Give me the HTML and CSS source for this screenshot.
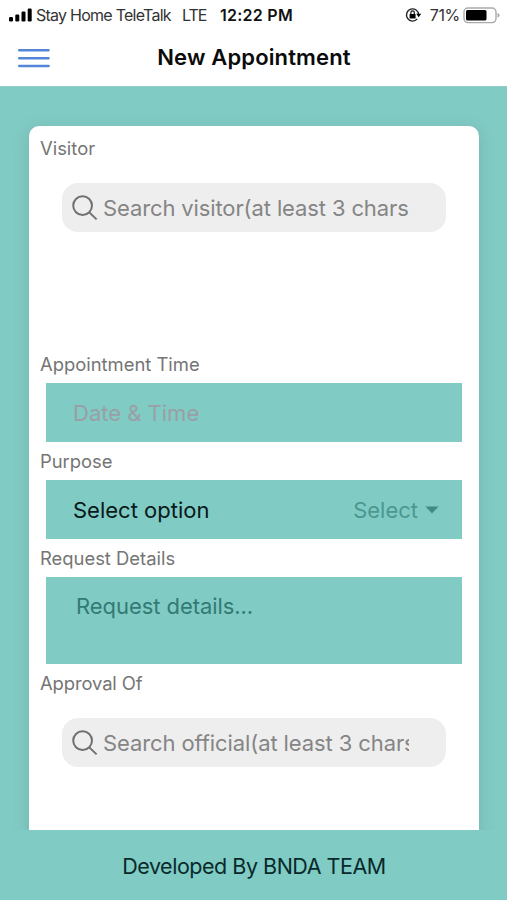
FILE: index.html
```html
<!DOCTYPE html>
<html lang="en">
<head>
<meta charset="utf-8">
<title>New Appointment</title>
<link rel="stylesheet" href="styles.css">
</head>
<body>
<div class="status">
  <svg class="signal" width="24" height="14" viewBox="0 0 24 14"><rect x="0" y="9" width="4" height="4.5" rx="1.2"/><rect x="6.3" y="6.5" width="4" height="7" rx="1.2"/><rect x="12.5" y="3.5" width="4" height="10" rx="1.2"/><rect x="18.7" y="0.5" width="4" height="13" rx="1.2"/></svg>
  <span class="carrier">Stay Home TeleTalk</span>
  <span class="network">LTE</span>
  <span class="clock">12:22 PM</span>
  <svg class="lock" width="17" height="16" viewBox="0 0 17 16"><path d="M12.3 11.9A6.1 6.1 0 1 1 13.7 7.8" fill="none" stroke="#222" stroke-width="1.4"/><path d="M11.2 6.8h5l-2.5 3.4z"/><rect x="4.6" y="6.9" width="6" height="4.6" rx=".6"/><path d="M5.9 7V5.6a1.7 1.7 0 0 1 3.4 0V7" fill="none" stroke="#111" stroke-width="1.2"/></svg>
  <span class="percent">71%</span>
  <svg class="battery" width="37" height="17" viewBox="0 0 37 17"><rect x="1" y="1" width="32" height="14.6" rx="4" fill="none" stroke="#aaa" stroke-width="1.4"/><rect x="3" y="3" width="20.5" height="10.6" rx="1.5"/><path d="M34.5 6q2 .5 2 2.3t-2 2.3z" fill="#aaa"/></svg>
</div>
<header class="header">
  <svg class="menu" width="32" height="21" viewBox="0 0 32 21"><path d="M1.3 2.2h29.2M1.3 10.2h29.2M1.3 18h29.2" stroke="#5386d8" stroke-width="2.6" stroke-linecap="round"/></svg>
  <h1 class="title">New Appointment</h1>
</header>
<main class="content">
  <form class="card">
    <div class="label visitor">Visitor</div>
    <div class="search">
      <svg width="26" height="26" viewBox="0 0 26 26"><circle cx="10.6" cy="10.6" r="9.4"/><path d="M17.3 17.4l7.3 7"/></svg>
      <span class="hint search-visitor">Search visitor(at least 3 chars</span>
    </div>
    <div class="label time">Appointment Time</div>
    <div class="field"><span class="date">Date &amp; Time</span></div>
    <div class="label purpose">Purpose</div>
    <div class="field"><span class="option">Select option</span><span class="select">Select</span><svg class="caret" width="14" height="8" viewBox="0 0 14 8"><path d="M.5.5h13L7 7.5z"/></svg></div>
    <div class="label request">Request Details</div>
    <div class="field area"><span class="details">Request details...</span></div>
    <div class="label approval">Approval Of</div>
    <div class="search">
      <svg width="26" height="26" viewBox="0 0 26 26"><circle cx="10.6" cy="10.6" r="9.4"/><path d="M17.3 17.4l7.3 7"/></svg>
      <span class="hint search-official">Search official(at least 3 chars</span>
    </div>
  </form>
</main>
<footer class="footer"><span>Developed By BNDA TEAM</span></footer>
</body>
</html>
```
FILE: styles.css
```css
* { box-sizing: border-box; }
body {
  margin: 0;
  height: 900px;
  display: flex;
  flex-direction: column;
  overflow: hidden;
  background: #fff;
  font-family: Inter, "Liberation Sans", sans-serif;
  white-space: nowrap;
}
.status {
  height: 30px;
  display: flex;
  align-items: center;
  padding: 0 7px 0 9px;
  font-size: 16px;
  color: #333;
}
.signal { margin-right: 3px; }
.carrier { width: 146px; letter-spacing: -0.75px; }
.network { width: 38px; letter-spacing: -1px; }
.clock { font-weight: 600; color: #111; letter-spacing: 0.25px; }
.lock { margin-left: auto; margin-right: 8px; }
.percent { margin-right: 3px; letter-spacing: -0.3px; }
.header {
  height: 56px;
  display: grid;
  grid-template-columns: 50px 1fr 50px;
  align-items: center;
  padding: 0 17px 0 18px;
}
.title {
  margin: -2px 0 0;
  text-align: center;
  font-size: 22px;
  font-weight: 600;
  letter-spacing: 0.15px;
  color: #0b0b0b;
}
.content {
  height: 744px;
  padding: 39px 28px 0 29px;
  background: #80cbc4;
  border-top: 1px solid #91cdc7;
  overflow: hidden;
}
.card {
  height: 760px;
  background: #fff;
  border-radius: 10px;
  box-shadow: 0 3px 16px rgba(80, 100, 100, .22);
}
.label {
  height: 38px;
  padding-left: 11px;
  line-height: 39px;
  font-size: 18.4px;
  color: #757575;
}
.visitor { height: 57px; line-height: 45px; }
.time { margin-top: 132px; height: 19px; line-height: 0; }
.approval { height: 54px; letter-spacing: -0.1px; }
.search {
  width: 384px;
  height: 49px;
  margin-left: 33px;
  padding: 0 37px 0 10px;
  display: flex;
  align-items: center;
  gap: 5px;
  background: #eee;
  border-radius: 16px;
}
.search svg { flex: none; fill: none; stroke: #707070; stroke-width: 2; }
.hint { flex: 1; overflow: hidden; font-size: 22px; line-height: 32px; color: #858585; }
.search-visitor { letter-spacing: -0.12px; }
.search-official { letter-spacing: -0.1px; }
.field {
  width: 416px;
  height: 59px;
  margin-left: 17px;
  padding: 0 23px 0 27px;
  display: flex;
  align-items: center;
  background: #80cbc4;
  font-size: 22px;
}
.date { color: #9a9fa5; }
.option { color: #08191a; }
.select { margin-left: auto; color: #4c9790; }
.caret { margin-left: 7px; fill: #3f8b85; }
.area { height: 87px; align-items: flex-start; padding: 16px 30px; }
.details { color: #337a74; letter-spacing: -0.06px; }
.footer {
  height: 70px;
  display: flex;
  align-items: center;
  justify-content: center;
  padding: 1px 0 0 1px;
  background: #80cbc4;
  font-size: 21.5px;
  letter-spacing: -0.48px;
  color: #082a2b;
}
```
